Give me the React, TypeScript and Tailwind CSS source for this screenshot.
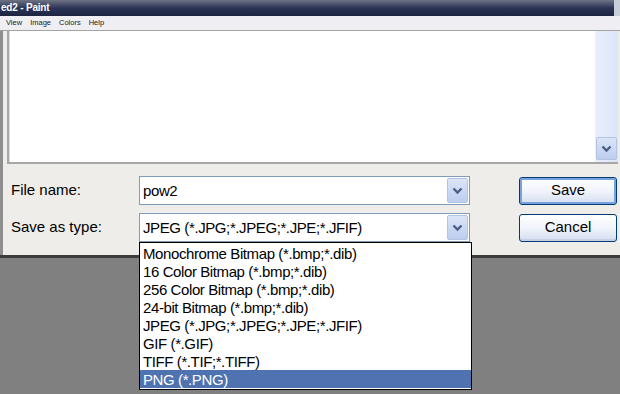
import React from "react";

const font = { fontFamily: '"Liberation Sans", Arial, sans-serif' };

const types = [
  "Monochrome Bitmap (*.bmp;*.dib)",
  "16 Color Bitmap (*.bmp;*.dib)",
  "256 Color Bitmap (*.bmp;*.dib)",
  "24-bit Bitmap (*.bmp;*.dib)",
  "JPEG (*.JPG;*.JPEG;*.JPE;*.JFIF)",
  "GIF (*.GIF)",
  "TIFF (*.TIF;*.TIFF)",
  "PNG (*.PNG)",
];

function Chevron() {
  return (
    <svg width="11" height="8" viewBox="0 0 11 8">
      <path d="M1.5 1.5 L5.5 5.5 L9.5 1.5" fill="none" stroke="#4b5e83" strokeWidth="2.4" />
    </svg>
  );
}

function ArrowButton({ className = "" }: { className?: string }) {
  return (
    <div
      className={`flex items-center justify-center rounded-[2px] border border-[#b3c3e4] bg-gradient-to-b from-[#dbe5f8] to-[#bccdee] ${className}`}
    >
      <Chevron />
    </div>
  );
}

function Field({ text }: { text: string }) {
  return (
    <div className="flex h-[29px] w-[331px] items-center border border-[#7f9db9] bg-white pl-[3px] pr-[1px]">
      <span className="flex-1 text-[15px] leading-none tracking-[-0.4px] text-black">{text}</span>
      <ArrowButton className="h-[25px] w-[21px]" />
    </div>
  );
}

function Button({ label, focused }: { label: string; focused?: boolean }) {
  return (
    <div
      className={`flex h-[28px] w-[98px] items-center justify-center rounded-[3px] border border-[#003c74] bg-gradient-to-b from-[#ffffff] via-[#f1f4fb] to-[#d3ddf0] text-[15px] text-black ${
        focused ? "shadow-[inset_0_0_0_2px_#7aa0e0]" : "shadow-[inset_0_-2px_0_#c5d0e6]"
      }`}
    >
      {label}
    </div>
  );
}

export default function App() {
  return (
    <div className="relative h-[394px] w-[620px] overflow-hidden bg-[#808080]" style={font}>
      {/* title bar */}
      <div className="flex h-[16px] items-center bg-gradient-to-b from-[#6e7484] via-[#2c3456] to-[#1d2442] pl-[1px]">
        <span className="text-[10px] font-bold leading-none tracking-[-0.2px] text-white">ed2 - Paint</span>
        <div className="ml-auto h-[16px] w-[6px] bg-[#c9ced8]" />
      </div>

      {/* menu bar */}
      <div className="flex h-[15px] items-center gap-[8px] border-b border-[#a4a4a4] bg-[#efeef2] pl-[6px] text-[7.5px] text-[#222]">
        <span>View</span>
        <span>Image</span>
        <span>Colors</span>
        <span>Help</span>
      </div>

      {/* dialog */}
      <div className="flex h-[224px] flex-col border-l-[3px] border-[#8e8e8e] bg-[#eeedea] pl-[4px] pr-[2px]">
        {/* file list */}
        <div className="flex h-[133px] border-b-[2px] border-l-[2px] border-[#a7a7a7] bg-white">
          <div className="flex-1 border-l border-[#dcdcdc]" />
          <div className="flex w-[23px] flex-col items-end bg-gradient-to-r from-[#e9effd] to-[#dbe4f8] pb-[2px] pr-[1px]">
            <div className="flex-1" />
            <ArrowButton className="h-[23px] w-[21px]" />
          </div>
        </div>

        {/* controls */}
        <div className="flex flex-col gap-[8px] pl-[4px] pt-[12px] text-black">
          <div className="flex items-center">
            <span className="w-[128px] text-[15px]">File name:</span>
            <Field text="pow2" />
            <div className="ml-[49px]">
              <Button label="Save" focused />
            </div>
          </div>
          <div className="flex items-center">
            <span className="w-[128px] text-[15px]">Save as type:</span>
            <Field text="JPEG (*.JPG;*.JPEG;*.JPE;*.JFIF)" />
            <div className="ml-[49px]">
              <Button label="Cancel" />
            </div>
          </div>
        </div>
      </div>
      <div className="h-[3px] bg-[#3c3c3c]" />

      {/* dropdown list */}
      <div className="absolute left-[139px] top-[242px] w-[333px] border border-black bg-white py-[1px]">
        {types.map((t, i) => (
          <div
            key={t}
            className={`flex h-[18px] items-center pl-[3px] text-[15px] leading-none tracking-[-0.4px] ${
              i === types.length - 1 ? "bg-[#4f72b0] text-white" : "text-black"
            }`}
          >
            {t}
          </div>
        ))}
      </div>
    </div>
  );
}
